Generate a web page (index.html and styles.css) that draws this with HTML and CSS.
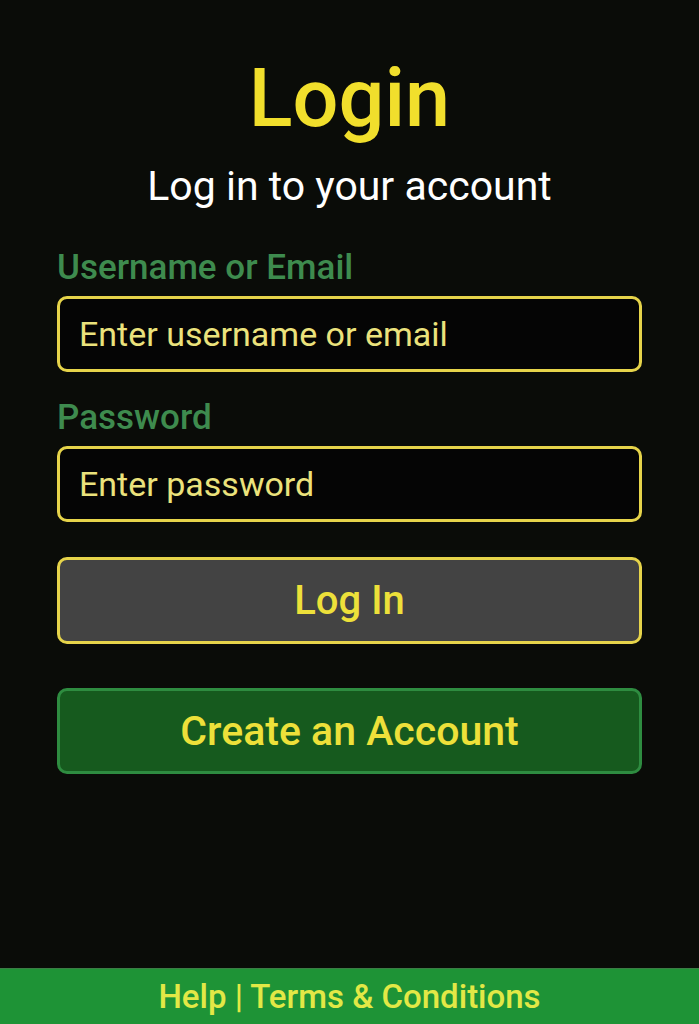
FILE: index.html
```html
<!DOCTYPE html>
<html lang="en">
<head>
<meta charset="utf-8">
<title>Login</title>
<link rel="stylesheet" href="styles.css">
</head>
<body>
<div class="page">
  <main class="login">
    <h1 class="title">Login</h1>
    <p class="subtitle">Log in to your account</p>
    <form class="form">
      <label class="label" for="user">Username or Email</label>
      <input class="field" id="user" type="text" placeholder="Enter username or email">
      <label class="label label-pw" for="pw">Password</label>
      <input class="field" id="pw" type="password" placeholder="Enter password">
      <button class="btn btn-login" type="button">Log In</button>
      <button class="btn btn-create" type="button">Create an Account</button>
    </form>
  </main>
  <footer class="footer">Help | Terms &amp; Conditions</footer>
</div>
</body>
</html>
```
FILE: styles.css
```css
* { box-sizing: border-box; }
html, body { margin: 0; padding: 0; height: 100%; }
body {
  background: #0a0c08;
  font-family: Roboto, "Liberation Sans", sans-serif;
}
.page {
  min-height: 1024px;
  display: flex;
  flex-direction: column;
}
.login {
  flex: 1;
  padding: 54px 57px 0 57px;
  display: flex;
  flex-direction: column;
}
.title {
  margin: 0;
  text-align: center;
  color: #f1df2c;
  font-size: 81px;
  font-weight: 500;
  line-height: 90px;
}
.subtitle {
  margin: 17px 0 0 0;
  text-align: center;
  color: #ffffff;
  font-size: 41px;
  font-weight: 400;
  line-height: 50px;
}
.form {
  display: flex;
  flex-direction: column;
  margin-top: 37px;
}
.label {
  color: #3e8b4e;
  font-size: 35px;
  font-weight: 500;
  line-height: 40px;
  margin-bottom: 8px;
}
.label-pw { margin-top: 26px; }
.field {
  height: 76px;
  border: 3px solid #e6d44a;
  border-radius: 10px;
  background: #050505;
  padding: 0 19px;
  font-family: inherit;
  font-size: 34px;
  color: #ebe27c;
}
.field::placeholder { color: #ebe27c; opacity: 1; }
.btn {
  border-radius: 10px;
  font-family: inherit;
  font-size: 40px;
  font-weight: 500;
  color: #ede03a;
}
.btn-login {
  height: 87px;
  margin-top: 35px;
  background: #434343;
  border: 3px solid #e6d44a;
}
.btn-create {
  height: 86px;
  margin-top: 44px;
  font-size: 41px;
  background: #165a1e;
  border: 3px solid #2e8c40;
}
.footer {
  height: 56px;
  background: #1e9336;
  border-top: 1px solid #3b7d45;
  color: #e2e846;
  font-size: 33px;
  font-weight: 500;
  display: flex;
  align-items: center;
  justify-content: center;
}
```
